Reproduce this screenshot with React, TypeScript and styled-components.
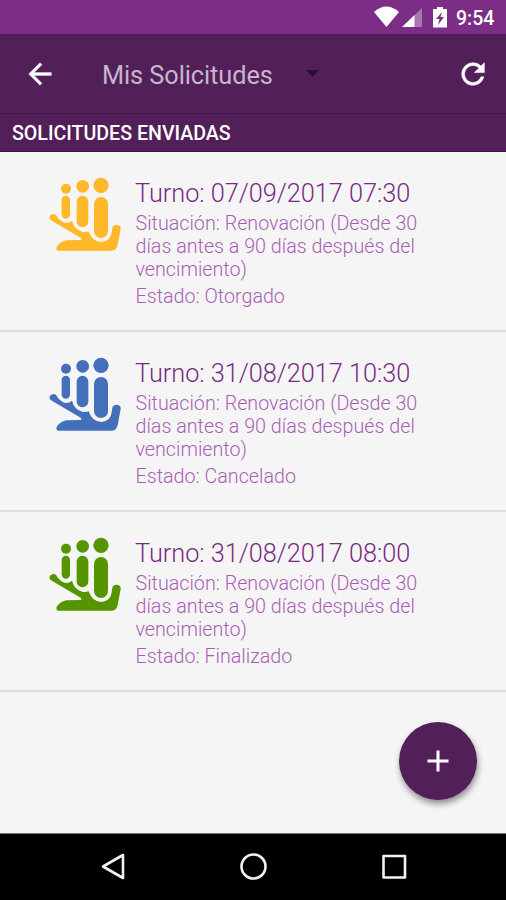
import React from 'react';
import styled, { createGlobalStyle } from 'styled-components';

const GlobalStyle = createGlobalStyle`
  * { box-sizing: border-box; }
  body { margin: 0; background: #f5f5f5; font-family: Roboto, sans-serif; }
`;

const Screen = styled.div`
  width: 506px;
  height: 900px;
  display: flex;
  flex-direction: column;
  background: #f5f5f5;
  overflow: hidden;
`;

const StatusBar = styled.header`
  height: 34px;
  flex: none;
  display: flex;
  justify-content: flex-end;
  align-items: center;
  padding-right: 11px;
  background: #7c2d85;
  color: #fff;
`;

const StatusIcons = styled.svg`
  display: block;
  flex: none;
`;

const Clock = styled.time`
  font-size: 19.5px;
  font-weight: 500;
  line-height: 34px;
  width: 39px;
  white-space: nowrap;
  padding-top: 3px;
`;

const Toolbar = styled.div`
  height: 80px;
  flex: none;
  display: flex;
  align-items: center;
  padding: 0 16px 0 23px;
  background: #521f59;
  border-bottom: 1px solid #471a4f;
`;

const IconButton = styled.button`
  width: 34px;
  height: 34px;
  padding: 0;
  border: 0;
  background: none;
  color: #fff;
  display: grid;
  place-items: center;
`;

const Picker = styled.div`
  flex: 1;
  display: flex;
  align-items: center;
  margin-left: 45px;
  gap: 33px;
  color: #c8b5cc;
  font-size: 25.3px;
  letter-spacing: -0.06px;
  line-height: 36px;
`;

const PickerLabel = styled.span`
  width: 171px;
  white-space: nowrap;
  padding-top: 4px;
`;

const SectionHeader = styled.h2`
  height: 38px;
  flex: none;
  margin: 0;
  padding-left: 12px;
  font-size: 19.6px;
  line-height: 39px;
  font-weight: 500;
  color: #fff;
  background: #521f59;
  border-bottom: 1px solid #420d4b;
`;

const List = styled.ul`
  list-style: none;
  margin: 0;
  padding: 0;
`;

const Row = styled.li`
  height: 180px;
  display: flex;
  padding: 13px 60px 0 40px;
  border-bottom: 2px solid #dedede;
`;

const Details = styled.div`
  padding-top: 13px;
  width: 310px;
  font-weight: 300;
`;

const Title = styled.h3`
  margin: 0;
  font-size: 25.3px;
  letter-spacing: -0.03px;
  line-height: 32px;
  font-weight: 300;
  color: #7a2a83;
  white-space: nowrap;
`;

const Description = styled.p<{ $gap: number }>`
  margin: ${(p) => p.$gap}px 0 0;
  padding-left: 0.5px;
  font-size: 19.7px;
  line-height: 23px;
  color: #aa5fb5;
`;

const Line = styled.span`
  display: block;
  white-space: nowrap;
`;

const Body = styled.main`
  flex: 1;
  display: flex;
  flex-direction: column;
`;

const FabArea = styled.div`
  display: flex;
  justify-content: flex-end;
  padding: 30px 29px 0 0;
`;

const Fab = styled.button`
  width: 78px;
  height: 78px;
  padding: 0;
  border: 0;
  border-radius: 50%;
  background: #521f59;
  display: grid;
  place-items: center;
  box-shadow: 1px 4px 6px rgba(0, 0, 0, 0.42);
`;

const NavBar = styled.nav`
  height: 67px;
  flex: none;
  display: flex;
  justify-content: space-between;
  align-items: center;
  padding: 0 97px 0 98px;
  background: #000;
  border-top: 1px solid #777;
`;

const FamilyIcon = ({ color }: { color: string }) => (
  <svg width="95" height="95" viewBox="0 0 285 285" fill={color}>
    <path d="M48 149 L54 159 Q76 184 96 167 Q102 193 128 201 Q140 202 146 199 Q157 231 184 231 Q212 229 215 202 L217 188 Q219 179 231 179 Q243 180 242 192 L233 240 Q229 257 216 257 L54 257 Q46 254 51 244 Q62 229 80 226 L122 225 Q127 222 122 218 L33 166 Q26 160 30 152 Q38 144 48 149Z" />
    <circle cx="78" cy="71" r="15" />
    <circle cx="128" cy="64" r="19" />
    <circle cx="183" cy="61" r="23" />
    <rect x="65" y="92" width="25" height="69" rx="12.5" />
    <rect x="110" y="92" width="35" height="95" rx="17.5" />
    <rect x="162" y="96" width="42" height="123" rx="21" />
  </svg>
);

const requests = [
  { turn: '07/09/2017 07:30', status: 'Otorgado', color: '#ffb829' },
  { turn: '31/08/2017 10:30', status: 'Cancelado', color: '#446fba' },
  { turn: '31/08/2017 08:00', status: 'Finalizado', color: '#559600' },
];

export default function App() {
  return (
    <>
      <GlobalStyle />
      <Screen>
        <StatusBar>
          <StatusIcons width="84" height="34" viewBox="0 0 84 34" fill="#fff">
            <path d="M2 12 Q14.500 1 27 12 L14.500 27Z" />
            <path d="M50 8V27H30Z" opacity=".35" />
            <path d="M42.500 15V27H30Z" />
            <path d="M61 9h4V7h6v2h4v18.500H61Z" />
            <path d="M70 12 L64 19h3.5L66 25 L72 17h-3.5Z" fill="#7c2d85" />
          </StatusIcons>
          <Clock>9:54</Clock>
        </StatusBar>
        <Toolbar>
          <IconButton aria-label="Volver">
            <svg width="34" height="34" viewBox="0 0 24 24" fill="currentColor" stroke="currentColor" strokeWidth="0.25">
              <path d="M20 11H7.83l5.59-5.59L12 4l-8 8 8 8 1.41-1.41L7.83 13H20v-2z" />
            </svg>
          </IconButton>
          <Picker>
            <PickerLabel>Mis Solicitudes</PickerLabel>
            <svg width="14" height="8" viewBox="0 0 14 8"><path d="M0 0h13L6.5 7Z" fill="#2b1030" /></svg>
          </Picker>
          <IconButton aria-label="Actualizar">
            <svg width="34" height="34" viewBox="0 0 24 24" fill="currentColor" stroke="currentColor" strokeWidth="0.4">
              <path d="M17.65 6.35A7.95 7.95 0 0 0 12 4a8 8 0 1 0 7.73 10h-2.08A6 6 0 1 1 12 6c1.66 0 3.14.69 4.22 1.78L13 11h7V4l-2.35 2.35z" />
            </svg>
          </IconButton>
        </Toolbar>
        <SectionHeader>SOLICITUDES ENVIADAS</SectionHeader>
        <Body>
          <List>
            {requests.map((r) => (
              <Row key={r.status}>
                <FamilyIcon color={r.color} />
                <Details>
                  <Title>Turno: {r.turn}</Title>
                  <Description $gap={2}>
                    <Line>Situación: Renovación (Desde 30</Line>
                    <Line>días antes a 90 días después del</Line>
                    <Line>vencimiento)</Line>
                  </Description>
                  <Description $gap={4}>Estado: {r.status}</Description>
                </Details>
              </Row>
            ))}
          </List>
          <FabArea>
            <Fab aria-label="Agregar">
              <svg width="22" height="22" viewBox="0 0 22 22" stroke="#fff" strokeWidth="3"><path d="M11 .5v21M.5 11h21" /></svg>
            </Fab>
          </FabArea>
        </Body>
        <NavBar>
          <svg width="30" height="30" viewBox="0 0 30 30" fill="none" stroke="#f2f2f2" strokeWidth="2.6" strokeLinejoin="round"><path d="M25 3V26L5 14.500Z" /></svg>
          <svg width="30" height="30" viewBox="0 0 30 30" fill="none" stroke="#f2f2f2" strokeWidth="2.6"><circle cx="14.5" cy="14.5" r="12" /></svg>
          <svg width="30" height="30" viewBox="0 0 30 30" fill="none" stroke="#f2f2f2" strokeWidth="2.6" strokeLinejoin="round"><rect x="4.5" y="4" width="21.5" height="21.5" /></svg>
        </NavBar>
      </Screen>
    </>
  );
}
